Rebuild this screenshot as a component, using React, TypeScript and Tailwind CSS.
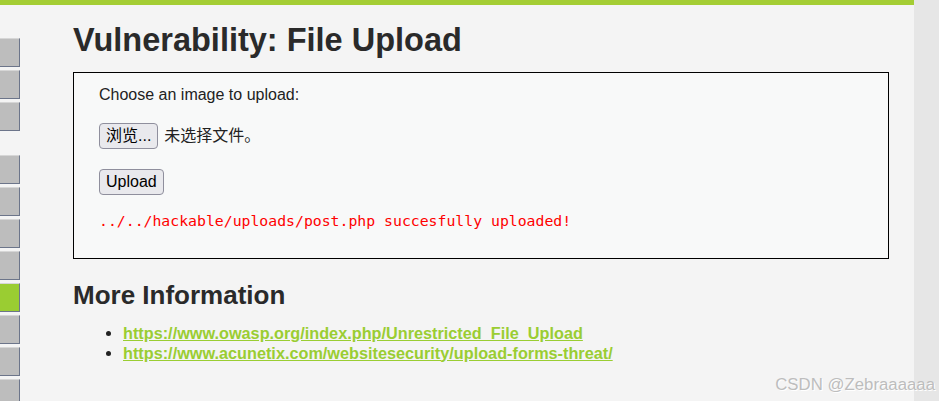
import React from 'react'

const cjk = '"Liberation Sans", "Noto Sans CJK SC", sans-serif'

/** One grey tab in the left rail; the active one is green. */
function RailTab({ active = false }: { active?: boolean }) {
  return (
    <div
      className={
        'h-[29px] w-[20px] mb-[3px] border-r border-b border-[#6c758a] border-t border-t-[#d6d6d6] ' +
        (active ? 'bg-[#9acd32]' : 'bg-[#bdbdbd]')
      }
    />
  )
}

function FakeButton({ children }: { children: React.ReactNode }) {
  return (
    <button
      type="button"
      className="h-[26px] px-[6px] rounded-[4px] border border-[#8f8f9d] bg-[#e9e9ed] text-[16px] leading-none text-black"
      style={{ fontFamily: cjk }}
    >
      {children}
    </button>
  )
}

export default function App() {
  return (
    <div
      className="relative w-[939px] h-[401px] overflow-hidden bg-[#e6e6e6] flex"
      style={{ fontFamily: '"Liberation Sans", Arial, sans-serif' }}
    >
      <div className="w-[914px] h-full bg-[#f4f4f4] flex flex-col">
        <div className="h-[5px] shrink-0 bg-[#a4cd34]" />
        <div className="flex flex-1">
          {/* left rail */}
          <div className="w-[20px] pt-[33px] flex flex-col shrink-0">
            <RailTab />
            <RailTab />
            <RailTab />
            <div className="h-[21px] shrink-0" />
            <RailTab />
            <RailTab />
            <RailTab />
            <RailTab />
            <RailTab active />
            <RailTab />
            <RailTab />
            <RailTab />
          </div>

          {/* body */}
          <div className="ml-[53px] w-[816px]">
            <h1 className="mt-[19px] text-[32.5px] leading-[32px] font-bold text-[#2a2a2a]">
              Vulnerability: File Upload
            </h1>

            <div className="mt-[16px] h-[187px] border border-black bg-[#f8f9f9] pl-[25px] pt-[12px]">
              <div className="text-[16px] leading-[20px] text-[#222]">Choose an image to upload:</div>
              <div className="mt-[18px] flex items-center gap-[6px]">
                <FakeButton>浏览...</FakeButton>
                <span className="text-[16px] text-[#222]" style={{ fontFamily: cjk }}>
                  未选择文件。
                </span>
              </div>
              <div className="mt-[20px]">
                <FakeButton>Upload</FakeButton>
              </div>
              <pre
                className="mt-[17px] text-[14.8px] leading-[18px] text-[#ff0000]"
                style={{ fontFamily: '"DejaVu Sans Mono", monospace' }}
              >
                ../../hackable/uploads/post.php succesfully uploaded!
              </pre>
            </div>

            <h2 className="mt-[21px] text-[26px] leading-[30px] font-bold text-[#2a2a2a]">More Information</h2>
            <ul className="mt-[14px] pl-[50px] list-disc text-[16.25px] leading-[19.5px] font-bold marker:text-[#222]">
              <li>
                <a className="text-[#9acd32] underline" href="#">
                  https://www.owasp.org/index.php/Unrestricted_File_Upload
                </a>
              </li>
              <li>
                <a className="text-[#9acd32] underline" href="#">
                  https://www.acunetix.com/websitesecurity/upload-forms-threat/
                </a>
              </li>
            </ul>
          </div>
        </div>
      </div>

      {/* watermark */}
      <div className="absolute right-[4px] top-[375px] text-[16.8px] leading-[20px] text-[#bdbdbd] [text-shadow:1px_1px_0_#ffffff]">
        CSDN @Zebraaaaaa
      </div>
    </div>
  )
}
